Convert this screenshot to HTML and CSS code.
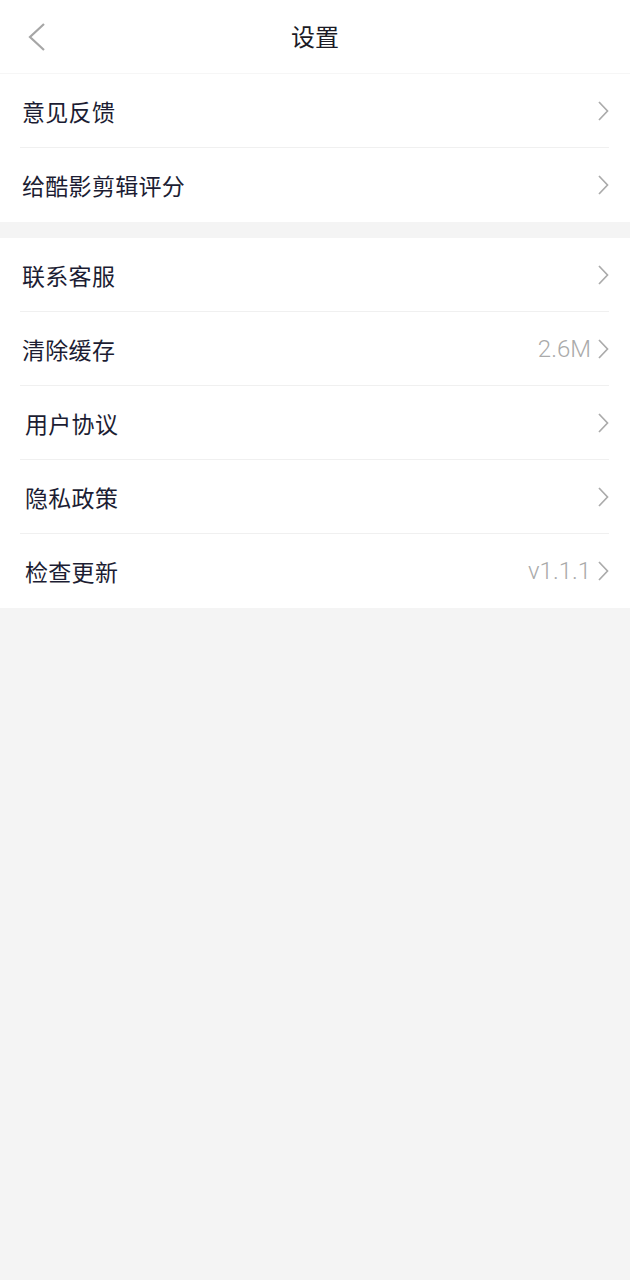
FILE: index.html
```html
<!DOCTYPE html>
<html lang="zh-CN">
<head>
<meta charset="utf-8">
<title>设置</title>
<link rel="stylesheet" href="styles.css">
</head>
<body>
<div class="page">
  <header class="header">
    <span class="back">
      <svg width="20" height="30" viewBox="0 0 20 30"><path d="M17 2 L3 15 L17 28" fill="none" stroke="#a6a6a6" stroke-width="2.2" stroke-linejoin="miter"/></svg>
    </span>
    <h1 class="title">设置</h1>
  </header>
  <section class="group">
    <div class="row"><span class="label">意见反馈</span><span class="right"><svg class="chev" width="12" height="20" viewBox="0 0 12 20"><path d="M2 1 L10.5 10 L2 19" fill="none" stroke="#ababab" stroke-width="1.7"/></svg></span></div>
    <div class="row last"><span class="label">给酷影剪辑评分</span><span class="right"><svg class="chev" width="12" height="20" viewBox="0 0 12 20"><path d="M2 1 L10.5 10 L2 19" fill="none" stroke="#ababab" stroke-width="1.7"/></svg></span></div>
  </section>
  <section class="group second">
    <div class="row"><span class="label">联系客服</span><span class="right"><svg class="chev" width="12" height="20" viewBox="0 0 12 20"><path d="M2 1 L10.5 10 L2 19" fill="none" stroke="#ababab" stroke-width="1.7"/></svg></span></div>
    <div class="row"><span class="label">清除缓存</span><span class="right"><span class="value">2.6M</span><svg class="chev" width="12" height="20" viewBox="0 0 12 20"><path d="M2 1 L10.5 10 L2 19" fill="none" stroke="#ababab" stroke-width="1.7"/></svg></span></div>
    <div class="row"><span class="label shift">用户协议</span><span class="right"><svg class="chev" width="12" height="20" viewBox="0 0 12 20"><path d="M2 1 L10.5 10 L2 19" fill="none" stroke="#ababab" stroke-width="1.7"/></svg></span></div>
    <div class="row"><span class="label shift">隐私政策</span><span class="right"><svg class="chev" width="12" height="20" viewBox="0 0 12 20"><path d="M2 1 L10.5 10 L2 19" fill="none" stroke="#ababab" stroke-width="1.7"/></svg></span></div>
    <div class="row last"><span class="label shift">检查更新</span><span class="right"><span class="value">v1.1.1</span><svg class="chev" width="12" height="20" viewBox="0 0 12 20"><path d="M2 1 L10.5 10 L2 19" fill="none" stroke="#ababab" stroke-width="1.7"/></svg></span></div>
  </section>
</div>
</body>
</html>
```
FILE: styles.css
```css
html, body {
  margin: 0;
  padding: 0;
  background: #f4f4f4;
  font-family: "Noto Sans CJK SC", "Noto Sans", Roboto, sans-serif;
}
.page {
  width: 630px;
  min-height: 1280px;
  background: #f4f4f4;
}
.header {
  height: 73px;
  background: #fff;
  border-bottom: 1px solid #f6f6f6;
  display: flex;
  align-items: center;
  justify-content: center;
  position: relative;
}
.back {
  position: absolute;
  left: 27px;
  top: 22px;
  width: 20px;
  height: 30px;
  display: block;
}
.back svg { display: block; }
.title {
  margin: 0 0 2px;
  font-size: 24px;
  font-weight: 400;
  color: #1b1b26;
  line-height: 1;
}
.group {
  background: #fff;
  padding: 0 21px 0 20px;
}
.group.second {
  margin-top: 16px;
}
.row {
  height: 73px;
  border-bottom: 1px solid #f0f0f0;
  display: flex;
  align-items: center;
  justify-content: space-between;
}
.row.last {
  height: 74px;
  border-bottom: none;
}
.label {
  font-size: 23px;
  color: #1c1d33;
  padding-left: 2px;
  letter-spacing: 0.3px;
}
.label.shift {
  padding-left: 5px;
}
.right {
  display: flex;
  align-items: center;
  gap: 6px;
}
.value {
  font-family: Roboto, "Noto Sans", sans-serif;
  font-size: 24px;
  font-weight: 300;
  color: #aaaaaa;
}
.chev { display: block; }
```
